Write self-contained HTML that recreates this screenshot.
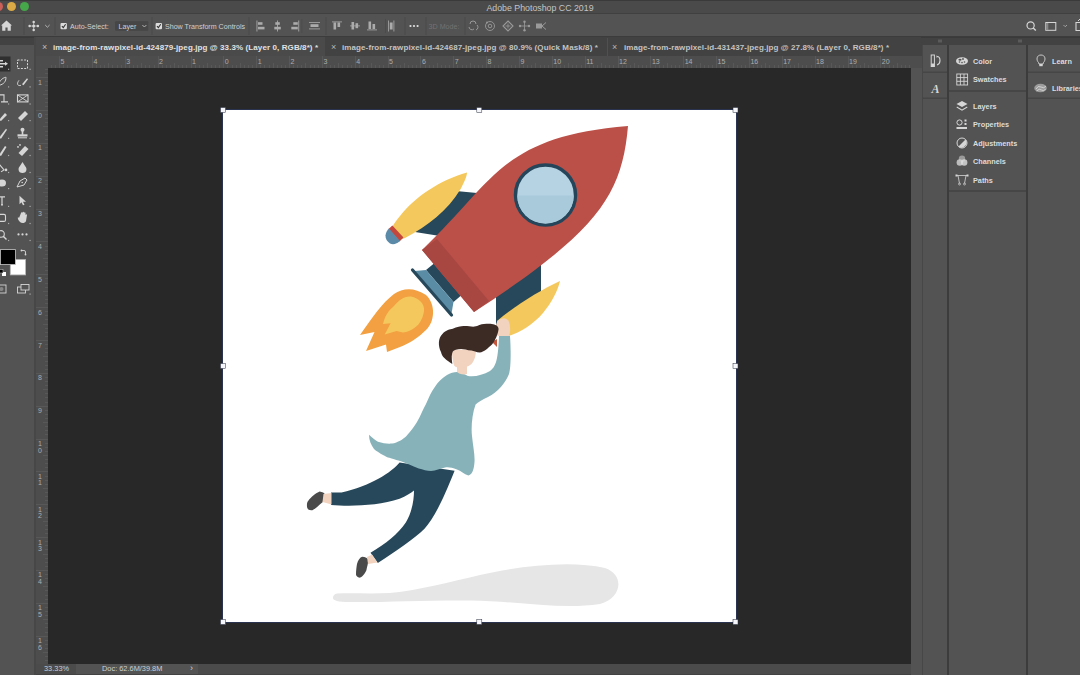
<!DOCTYPE html>
<html><head><meta charset="utf-8">
<style>
*{margin:0;padding:0;box-sizing:border-box}
html,body{width:1080px;height:675px;overflow:hidden;background:#535353;font-family:"Liberation Sans",sans-serif;position:relative}
.a{position:absolute}
#title{left:0;top:0;width:1080px;height:14px;background:#4a4a4a;border-top:1px solid #3a3a3a;border-bottom:1px solid #404040}
#title .t{position:absolute;left:0;width:1080px;top:1.8px;text-align:center;color:#c4c4c4;font-size:8.8px;line-height:11px}
.dot{position:absolute;top:1.2px;width:9px;height:9px;border-radius:50%}
#opts{left:0;top:14px;width:1080px;height:23px;background:#535353;border-bottom:1px solid #3c3c3c}
#tabs{left:36px;top:37px;width:886px;height:19px;background:#424242}
.tab{position:absolute;height:19px;color:#cfcfcf;font-size:8px;font-weight:bold;letter-spacing:0.1px;line-height:19px;white-space:nowrap}
#rulerT{left:36px;top:56px;width:886px;height:12px;background:#4d4d4d}
#rulerL{left:36px;top:56px;width:12px;height:608px;background:#4d4d4d}
#canvas{left:48px;top:68px;width:863px;height:596px;background:#282828}
#status{left:36px;top:664px;width:886px;height:11px;background:#4b4b4b;border-bottom:1px solid #424242}
#tools{left:0;top:37px;width:34px;height:638px;background:#535353}
#doc{left:222px;top:109px;width:514.5px;height:514px;border:1px solid #2a3450;background:#fff}
.pcol{position:absolute;top:37px;height:638px;background:#535353}
.hdr{position:absolute;top:37px;height:8px;background:#424242;border-top:1px solid #3a3a3a}
.ptxt{position:absolute;color:#dcdcdc;font-size:7.3px;font-weight:bold;line-height:10px;white-space:nowrap}
.tk{position:absolute;width:1px;background:#585858}
.rn{position:absolute;color:#aeaeae;font-size:7px;line-height:7px}
.ot{position:absolute;color:#d0d0d0;font-size:7.1px;line-height:10px;white-space:nowrap}
</style></head><body>
<div id="title" class="a"><div class="dot" style="left:-6.5px;background:#cc5f57"></div><div class="dot" style="left:6.5px;background:#d9aa45"></div><div class="dot" style="left:19.5px;background:#46a64a"></div><div class="t">Adobe Photoshop CC 2019</div></div>
<div id="opts" class="a"></div>
<div id="tools" class="a"></div>
<div class="a" style="left:0;top:37px;width:34px;height:8px;background:#424242;border-top:1px solid #3a3a3a"></div>
<div class="a" style="left:34px;top:37px;width:2px;height:638px;background:#474747"></div>
<div id="tabs" class="a"></div>
<div class="a" style="left:36px;top:37px;width:289px;height:19px;background:#4a4a4a"></div>
<div class="a" style="left:607px;top:38px;width:1px;height:18px;background:#505050"></div>
<div id="rulerT" class="a"></div>
<div id="rulerL" class="a"></div>
<div class="tk" style="left:50.8px;top:65px;height:3px"></div>
<div class="tk" style="left:54.9px;top:65px;height:3px"></div>
<div class="tk" style="left:59.1px;top:56px;height:12px"></div>
<div class="tk" style="left:63.2px;top:65px;height:3px"></div>
<div class="tk" style="left:67.3px;top:65px;height:3px"></div>
<div class="tk" style="left:71.4px;top:65px;height:3px"></div>
<div class="tk" style="left:75.5px;top:63px;height:5px"></div>
<div class="tk" style="left:79.6px;top:65px;height:3px"></div>
<div class="tk" style="left:83.7px;top:65px;height:3px"></div>
<div class="tk" style="left:87.8px;top:65px;height:3px"></div>
<div class="rn" style="left:60.6px;top:57.5px">5</div>
<div class="tk" style="left:91.9px;top:56px;height:12px"></div>
<div class="tk" style="left:96.0px;top:65px;height:3px"></div>
<div class="tk" style="left:100.1px;top:65px;height:3px"></div>
<div class="tk" style="left:104.2px;top:65px;height:3px"></div>
<div class="tk" style="left:108.3px;top:63px;height:5px"></div>
<div class="tk" style="left:112.4px;top:65px;height:3px"></div>
<div class="tk" style="left:116.5px;top:65px;height:3px"></div>
<div class="tk" style="left:120.6px;top:65px;height:3px"></div>
<div class="rn" style="left:93.4px;top:57.5px">4</div>
<div class="tk" style="left:124.8px;top:56px;height:12px"></div>
<div class="tk" style="left:128.9px;top:65px;height:3px"></div>
<div class="tk" style="left:133.0px;top:65px;height:3px"></div>
<div class="tk" style="left:137.1px;top:65px;height:3px"></div>
<div class="tk" style="left:141.2px;top:63px;height:5px"></div>
<div class="tk" style="left:145.3px;top:65px;height:3px"></div>
<div class="tk" style="left:149.4px;top:65px;height:3px"></div>
<div class="tk" style="left:153.5px;top:65px;height:3px"></div>
<div class="rn" style="left:126.2px;top:57.5px">3</div>
<div class="tk" style="left:157.6px;top:56px;height:12px"></div>
<div class="tk" style="left:161.7px;top:65px;height:3px"></div>
<div class="tk" style="left:165.8px;top:65px;height:3px"></div>
<div class="tk" style="left:169.9px;top:65px;height:3px"></div>
<div class="tk" style="left:174.0px;top:63px;height:5px"></div>
<div class="tk" style="left:178.1px;top:65px;height:3px"></div>
<div class="tk" style="left:182.2px;top:65px;height:3px"></div>
<div class="tk" style="left:186.3px;top:65px;height:3px"></div>
<div class="rn" style="left:159.1px;top:57.5px">2</div>
<div class="tk" style="left:190.5px;top:56px;height:12px"></div>
<div class="tk" style="left:194.6px;top:65px;height:3px"></div>
<div class="tk" style="left:198.7px;top:65px;height:3px"></div>
<div class="tk" style="left:202.8px;top:65px;height:3px"></div>
<div class="tk" style="left:206.9px;top:63px;height:5px"></div>
<div class="tk" style="left:211.0px;top:65px;height:3px"></div>
<div class="tk" style="left:215.1px;top:65px;height:3px"></div>
<div class="tk" style="left:219.2px;top:65px;height:3px"></div>
<div class="rn" style="left:192.0px;top:57.5px">1</div>
<div class="tk" style="left:223.3px;top:56px;height:12px"></div>
<div class="tk" style="left:227.4px;top:65px;height:3px"></div>
<div class="tk" style="left:231.5px;top:65px;height:3px"></div>
<div class="tk" style="left:235.6px;top:65px;height:3px"></div>
<div class="tk" style="left:239.7px;top:63px;height:5px"></div>
<div class="tk" style="left:243.8px;top:65px;height:3px"></div>
<div class="tk" style="left:247.9px;top:65px;height:3px"></div>
<div class="tk" style="left:252.0px;top:65px;height:3px"></div>
<div class="rn" style="left:224.8px;top:57.5px">0</div>
<div class="tk" style="left:256.2px;top:56px;height:12px"></div>
<div class="tk" style="left:260.3px;top:65px;height:3px"></div>
<div class="tk" style="left:264.4px;top:65px;height:3px"></div>
<div class="tk" style="left:268.5px;top:65px;height:3px"></div>
<div class="tk" style="left:272.6px;top:63px;height:5px"></div>
<div class="tk" style="left:276.7px;top:65px;height:3px"></div>
<div class="tk" style="left:280.8px;top:65px;height:3px"></div>
<div class="tk" style="left:284.9px;top:65px;height:3px"></div>
<div class="rn" style="left:257.7px;top:57.5px">1</div>
<div class="tk" style="left:289.0px;top:56px;height:12px"></div>
<div class="tk" style="left:293.1px;top:65px;height:3px"></div>
<div class="tk" style="left:297.2px;top:65px;height:3px"></div>
<div class="tk" style="left:301.3px;top:65px;height:3px"></div>
<div class="tk" style="left:305.4px;top:63px;height:5px"></div>
<div class="tk" style="left:309.5px;top:65px;height:3px"></div>
<div class="tk" style="left:313.6px;top:65px;height:3px"></div>
<div class="tk" style="left:317.7px;top:65px;height:3px"></div>
<div class="rn" style="left:290.5px;top:57.5px">2</div>
<div class="tk" style="left:321.9px;top:56px;height:12px"></div>
<div class="tk" style="left:326.0px;top:65px;height:3px"></div>
<div class="tk" style="left:330.1px;top:65px;height:3px"></div>
<div class="tk" style="left:334.2px;top:65px;height:3px"></div>
<div class="tk" style="left:338.3px;top:63px;height:5px"></div>
<div class="tk" style="left:342.4px;top:65px;height:3px"></div>
<div class="tk" style="left:346.5px;top:65px;height:3px"></div>
<div class="tk" style="left:350.6px;top:65px;height:3px"></div>
<div class="rn" style="left:323.4px;top:57.5px">3</div>
<div class="tk" style="left:354.7px;top:56px;height:12px"></div>
<div class="tk" style="left:358.8px;top:65px;height:3px"></div>
<div class="tk" style="left:362.9px;top:65px;height:3px"></div>
<div class="tk" style="left:367.0px;top:65px;height:3px"></div>
<div class="tk" style="left:371.1px;top:63px;height:5px"></div>
<div class="tk" style="left:375.2px;top:65px;height:3px"></div>
<div class="tk" style="left:379.3px;top:65px;height:3px"></div>
<div class="tk" style="left:383.4px;top:65px;height:3px"></div>
<div class="rn" style="left:356.2px;top:57.5px">4</div>
<div class="tk" style="left:387.6px;top:56px;height:12px"></div>
<div class="tk" style="left:391.7px;top:65px;height:3px"></div>
<div class="tk" style="left:395.8px;top:65px;height:3px"></div>
<div class="tk" style="left:399.9px;top:65px;height:3px"></div>
<div class="tk" style="left:404.0px;top:63px;height:5px"></div>
<div class="tk" style="left:408.1px;top:65px;height:3px"></div>
<div class="tk" style="left:412.2px;top:65px;height:3px"></div>
<div class="tk" style="left:416.3px;top:65px;height:3px"></div>
<div class="rn" style="left:389.1px;top:57.5px">5</div>
<div class="tk" style="left:420.4px;top:56px;height:12px"></div>
<div class="tk" style="left:424.5px;top:65px;height:3px"></div>
<div class="tk" style="left:428.6px;top:65px;height:3px"></div>
<div class="tk" style="left:432.7px;top:65px;height:3px"></div>
<div class="tk" style="left:436.8px;top:63px;height:5px"></div>
<div class="tk" style="left:440.9px;top:65px;height:3px"></div>
<div class="tk" style="left:445.0px;top:65px;height:3px"></div>
<div class="tk" style="left:449.1px;top:65px;height:3px"></div>
<div class="rn" style="left:421.9px;top:57.5px">6</div>
<div class="tk" style="left:453.2px;top:56px;height:12px"></div>
<div class="tk" style="left:457.4px;top:65px;height:3px"></div>
<div class="tk" style="left:461.5px;top:65px;height:3px"></div>
<div class="tk" style="left:465.6px;top:65px;height:3px"></div>
<div class="tk" style="left:469.7px;top:63px;height:5px"></div>
<div class="tk" style="left:473.8px;top:65px;height:3px"></div>
<div class="tk" style="left:477.9px;top:65px;height:3px"></div>
<div class="tk" style="left:482.0px;top:65px;height:3px"></div>
<div class="rn" style="left:454.8px;top:57.5px">7</div>
<div class="tk" style="left:486.1px;top:56px;height:12px"></div>
<div class="tk" style="left:490.2px;top:65px;height:3px"></div>
<div class="tk" style="left:494.3px;top:65px;height:3px"></div>
<div class="tk" style="left:498.4px;top:65px;height:3px"></div>
<div class="tk" style="left:502.5px;top:63px;height:5px"></div>
<div class="tk" style="left:506.6px;top:65px;height:3px"></div>
<div class="tk" style="left:510.7px;top:65px;height:3px"></div>
<div class="tk" style="left:514.8px;top:65px;height:3px"></div>
<div class="rn" style="left:487.6px;top:57.5px">8</div>
<div class="tk" style="left:519.0px;top:56px;height:12px"></div>
<div class="tk" style="left:523.1px;top:65px;height:3px"></div>
<div class="tk" style="left:527.2px;top:65px;height:3px"></div>
<div class="tk" style="left:531.3px;top:65px;height:3px"></div>
<div class="tk" style="left:535.4px;top:63px;height:5px"></div>
<div class="tk" style="left:539.5px;top:65px;height:3px"></div>
<div class="tk" style="left:543.6px;top:65px;height:3px"></div>
<div class="tk" style="left:547.7px;top:65px;height:3px"></div>
<div class="rn" style="left:520.5px;top:57.5px">9</div>
<div class="tk" style="left:551.8px;top:56px;height:12px"></div>
<div class="tk" style="left:555.9px;top:65px;height:3px"></div>
<div class="tk" style="left:560.0px;top:65px;height:3px"></div>
<div class="tk" style="left:564.1px;top:65px;height:3px"></div>
<div class="tk" style="left:568.2px;top:63px;height:5px"></div>
<div class="tk" style="left:572.3px;top:65px;height:3px"></div>
<div class="tk" style="left:576.4px;top:65px;height:3px"></div>
<div class="tk" style="left:580.5px;top:65px;height:3px"></div>
<div class="rn" style="left:553.3px;top:57.5px">10</div>
<div class="tk" style="left:584.7px;top:56px;height:12px"></div>
<div class="tk" style="left:588.8px;top:65px;height:3px"></div>
<div class="tk" style="left:592.9px;top:65px;height:3px"></div>
<div class="tk" style="left:597.0px;top:65px;height:3px"></div>
<div class="tk" style="left:601.1px;top:63px;height:5px"></div>
<div class="tk" style="left:605.2px;top:65px;height:3px"></div>
<div class="tk" style="left:609.3px;top:65px;height:3px"></div>
<div class="tk" style="left:613.4px;top:65px;height:3px"></div>
<div class="rn" style="left:586.2px;top:57.5px">11</div>
<div class="tk" style="left:617.5px;top:56px;height:12px"></div>
<div class="tk" style="left:621.6px;top:65px;height:3px"></div>
<div class="tk" style="left:625.7px;top:65px;height:3px"></div>
<div class="tk" style="left:629.8px;top:65px;height:3px"></div>
<div class="tk" style="left:633.9px;top:63px;height:5px"></div>
<div class="tk" style="left:638.0px;top:65px;height:3px"></div>
<div class="tk" style="left:642.1px;top:65px;height:3px"></div>
<div class="tk" style="left:646.2px;top:65px;height:3px"></div>
<div class="rn" style="left:619.0px;top:57.5px">12</div>
<div class="tk" style="left:650.4px;top:56px;height:12px"></div>
<div class="tk" style="left:654.5px;top:65px;height:3px"></div>
<div class="tk" style="left:658.6px;top:65px;height:3px"></div>
<div class="tk" style="left:662.7px;top:65px;height:3px"></div>
<div class="tk" style="left:666.8px;top:63px;height:5px"></div>
<div class="tk" style="left:670.9px;top:65px;height:3px"></div>
<div class="tk" style="left:675.0px;top:65px;height:3px"></div>
<div class="tk" style="left:679.1px;top:65px;height:3px"></div>
<div class="rn" style="left:651.9px;top:57.5px">13</div>
<div class="tk" style="left:683.2px;top:56px;height:12px"></div>
<div class="tk" style="left:687.3px;top:65px;height:3px"></div>
<div class="tk" style="left:691.4px;top:65px;height:3px"></div>
<div class="tk" style="left:695.5px;top:65px;height:3px"></div>
<div class="tk" style="left:699.6px;top:63px;height:5px"></div>
<div class="tk" style="left:703.7px;top:65px;height:3px"></div>
<div class="tk" style="left:707.8px;top:65px;height:3px"></div>
<div class="tk" style="left:711.9px;top:65px;height:3px"></div>
<div class="rn" style="left:684.7px;top:57.5px">14</div>
<div class="tk" style="left:716.0px;top:56px;height:12px"></div>
<div class="tk" style="left:720.2px;top:65px;height:3px"></div>
<div class="tk" style="left:724.3px;top:65px;height:3px"></div>
<div class="tk" style="left:728.4px;top:65px;height:3px"></div>
<div class="tk" style="left:732.5px;top:63px;height:5px"></div>
<div class="tk" style="left:736.6px;top:65px;height:3px"></div>
<div class="tk" style="left:740.7px;top:65px;height:3px"></div>
<div class="tk" style="left:744.8px;top:65px;height:3px"></div>
<div class="rn" style="left:717.5px;top:57.5px">15</div>
<div class="tk" style="left:748.9px;top:56px;height:12px"></div>
<div class="tk" style="left:753.0px;top:65px;height:3px"></div>
<div class="tk" style="left:757.1px;top:65px;height:3px"></div>
<div class="tk" style="left:761.2px;top:65px;height:3px"></div>
<div class="tk" style="left:765.3px;top:63px;height:5px"></div>
<div class="tk" style="left:769.4px;top:65px;height:3px"></div>
<div class="tk" style="left:773.5px;top:65px;height:3px"></div>
<div class="tk" style="left:777.6px;top:65px;height:3px"></div>
<div class="rn" style="left:750.4px;top:57.5px">16</div>
<div class="tk" style="left:781.8px;top:56px;height:12px"></div>
<div class="tk" style="left:785.9px;top:65px;height:3px"></div>
<div class="tk" style="left:790.0px;top:65px;height:3px"></div>
<div class="tk" style="left:794.1px;top:65px;height:3px"></div>
<div class="tk" style="left:798.2px;top:63px;height:5px"></div>
<div class="tk" style="left:802.3px;top:65px;height:3px"></div>
<div class="tk" style="left:806.4px;top:65px;height:3px"></div>
<div class="tk" style="left:810.5px;top:65px;height:3px"></div>
<div class="rn" style="left:783.2px;top:57.5px">17</div>
<div class="tk" style="left:814.6px;top:56px;height:12px"></div>
<div class="tk" style="left:818.7px;top:65px;height:3px"></div>
<div class="tk" style="left:822.8px;top:65px;height:3px"></div>
<div class="tk" style="left:826.9px;top:65px;height:3px"></div>
<div class="tk" style="left:831.0px;top:63px;height:5px"></div>
<div class="tk" style="left:835.1px;top:65px;height:3px"></div>
<div class="tk" style="left:839.2px;top:65px;height:3px"></div>
<div class="tk" style="left:843.3px;top:65px;height:3px"></div>
<div class="rn" style="left:816.1px;top:57.5px">18</div>
<div class="tk" style="left:847.5px;top:56px;height:12px"></div>
<div class="tk" style="left:851.6px;top:65px;height:3px"></div>
<div class="tk" style="left:855.7px;top:65px;height:3px"></div>
<div class="tk" style="left:859.8px;top:65px;height:3px"></div>
<div class="tk" style="left:863.9px;top:63px;height:5px"></div>
<div class="tk" style="left:868.0px;top:65px;height:3px"></div>
<div class="tk" style="left:872.1px;top:65px;height:3px"></div>
<div class="tk" style="left:876.2px;top:65px;height:3px"></div>
<div class="rn" style="left:849.0px;top:57.5px">19</div>
<div class="tk" style="left:880.3px;top:56px;height:12px"></div>
<div class="tk" style="left:884.4px;top:65px;height:3px"></div>
<div class="tk" style="left:888.5px;top:65px;height:3px"></div>
<div class="tk" style="left:892.6px;top:65px;height:3px"></div>
<div class="tk" style="left:896.7px;top:63px;height:5px"></div>
<div class="tk" style="left:900.8px;top:65px;height:3px"></div>
<div class="tk" style="left:904.9px;top:65px;height:3px"></div>
<div class="tk" style="left:909.0px;top:65px;height:3px"></div>
<div class="rn" style="left:881.8px;top:57.5px">20</div>
<div class="tk" style="top:68.9px;left:45px;width:3px;height:1px"></div>
<div class="tk" style="top:73.0px;left:45px;width:3px;height:1px"></div>
<div class="tk" style="top:77.2px;left:36px;width:12px;height:1px"></div>
<div class="tk" style="top:81.3px;left:45px;width:3px;height:1px"></div>
<div class="tk" style="top:85.4px;left:45px;width:3px;height:1px"></div>
<div class="tk" style="top:89.5px;left:45px;width:3px;height:1px"></div>
<div class="tk" style="top:93.6px;left:43px;width:5px;height:1px"></div>
<div class="tk" style="top:97.7px;left:45px;width:3px;height:1px"></div>
<div class="tk" style="top:101.8px;left:45px;width:3px;height:1px"></div>
<div class="tk" style="top:105.9px;left:45px;width:3px;height:1px"></div>
<div class="rn" style="left:38px;top:78.7px">1</div>
<div class="tk" style="top:110.0px;left:36px;width:12px;height:1px"></div>
<div class="tk" style="top:114.1px;left:45px;width:3px;height:1px"></div>
<div class="tk" style="top:118.2px;left:45px;width:3px;height:1px"></div>
<div class="tk" style="top:122.3px;left:45px;width:3px;height:1px"></div>
<div class="tk" style="top:126.4px;left:43px;width:5px;height:1px"></div>
<div class="tk" style="top:130.5px;left:45px;width:3px;height:1px"></div>
<div class="tk" style="top:134.6px;left:45px;width:3px;height:1px"></div>
<div class="tk" style="top:138.7px;left:45px;width:3px;height:1px"></div>
<div class="rn" style="left:38px;top:111.5px">0</div>
<div class="tk" style="top:142.8px;left:36px;width:12px;height:1px"></div>
<div class="tk" style="top:147.0px;left:45px;width:3px;height:1px"></div>
<div class="tk" style="top:151.1px;left:45px;width:3px;height:1px"></div>
<div class="tk" style="top:155.2px;left:45px;width:3px;height:1px"></div>
<div class="tk" style="top:159.3px;left:43px;width:5px;height:1px"></div>
<div class="tk" style="top:163.4px;left:45px;width:3px;height:1px"></div>
<div class="tk" style="top:167.5px;left:45px;width:3px;height:1px"></div>
<div class="tk" style="top:171.6px;left:45px;width:3px;height:1px"></div>
<div class="rn" style="left:38px;top:144.3px">1</div>
<div class="tk" style="top:175.7px;left:36px;width:12px;height:1px"></div>
<div class="tk" style="top:179.8px;left:45px;width:3px;height:1px"></div>
<div class="tk" style="top:183.9px;left:45px;width:3px;height:1px"></div>
<div class="tk" style="top:188.0px;left:45px;width:3px;height:1px"></div>
<div class="tk" style="top:192.1px;left:43px;width:5px;height:1px"></div>
<div class="tk" style="top:196.2px;left:45px;width:3px;height:1px"></div>
<div class="tk" style="top:200.3px;left:45px;width:3px;height:1px"></div>
<div class="tk" style="top:204.4px;left:45px;width:3px;height:1px"></div>
<div class="rn" style="left:38px;top:177.2px">2</div>
<div class="tk" style="top:208.6px;left:36px;width:12px;height:1px"></div>
<div class="tk" style="top:212.7px;left:45px;width:3px;height:1px"></div>
<div class="tk" style="top:216.8px;left:45px;width:3px;height:1px"></div>
<div class="tk" style="top:220.9px;left:45px;width:3px;height:1px"></div>
<div class="tk" style="top:225.0px;left:43px;width:5px;height:1px"></div>
<div class="tk" style="top:229.1px;left:45px;width:3px;height:1px"></div>
<div class="tk" style="top:233.2px;left:45px;width:3px;height:1px"></div>
<div class="tk" style="top:237.3px;left:45px;width:3px;height:1px"></div>
<div class="rn" style="left:38px;top:210.1px">3</div>
<div class="tk" style="top:241.4px;left:36px;width:12px;height:1px"></div>
<div class="tk" style="top:245.5px;left:45px;width:3px;height:1px"></div>
<div class="tk" style="top:249.6px;left:45px;width:3px;height:1px"></div>
<div class="tk" style="top:253.7px;left:45px;width:3px;height:1px"></div>
<div class="tk" style="top:257.8px;left:43px;width:5px;height:1px"></div>
<div class="tk" style="top:261.9px;left:45px;width:3px;height:1px"></div>
<div class="tk" style="top:266.0px;left:45px;width:3px;height:1px"></div>
<div class="tk" style="top:270.1px;left:45px;width:3px;height:1px"></div>
<div class="rn" style="left:38px;top:242.9px">4</div>
<div class="tk" style="top:274.2px;left:36px;width:12px;height:1px"></div>
<div class="tk" style="top:278.4px;left:45px;width:3px;height:1px"></div>
<div class="tk" style="top:282.5px;left:45px;width:3px;height:1px"></div>
<div class="tk" style="top:286.6px;left:45px;width:3px;height:1px"></div>
<div class="tk" style="top:290.7px;left:43px;width:5px;height:1px"></div>
<div class="tk" style="top:294.8px;left:45px;width:3px;height:1px"></div>
<div class="tk" style="top:298.9px;left:45px;width:3px;height:1px"></div>
<div class="tk" style="top:303.0px;left:45px;width:3px;height:1px"></div>
<div class="rn" style="left:38px;top:275.8px">5</div>
<div class="tk" style="top:307.1px;left:36px;width:12px;height:1px"></div>
<div class="tk" style="top:311.2px;left:45px;width:3px;height:1px"></div>
<div class="tk" style="top:315.3px;left:45px;width:3px;height:1px"></div>
<div class="tk" style="top:319.4px;left:45px;width:3px;height:1px"></div>
<div class="tk" style="top:323.5px;left:43px;width:5px;height:1px"></div>
<div class="tk" style="top:327.6px;left:45px;width:3px;height:1px"></div>
<div class="tk" style="top:331.7px;left:45px;width:3px;height:1px"></div>
<div class="tk" style="top:335.8px;left:45px;width:3px;height:1px"></div>
<div class="rn" style="left:38px;top:308.6px">6</div>
<div class="tk" style="top:340.0px;left:36px;width:12px;height:1px"></div>
<div class="tk" style="top:344.1px;left:45px;width:3px;height:1px"></div>
<div class="tk" style="top:348.2px;left:45px;width:3px;height:1px"></div>
<div class="tk" style="top:352.3px;left:45px;width:3px;height:1px"></div>
<div class="tk" style="top:356.4px;left:43px;width:5px;height:1px"></div>
<div class="tk" style="top:360.5px;left:45px;width:3px;height:1px"></div>
<div class="tk" style="top:364.6px;left:45px;width:3px;height:1px"></div>
<div class="tk" style="top:368.7px;left:45px;width:3px;height:1px"></div>
<div class="rn" style="left:38px;top:341.5px">7</div>
<div class="tk" style="top:372.8px;left:36px;width:12px;height:1px"></div>
<div class="tk" style="top:376.9px;left:45px;width:3px;height:1px"></div>
<div class="tk" style="top:381.0px;left:45px;width:3px;height:1px"></div>
<div class="tk" style="top:385.1px;left:45px;width:3px;height:1px"></div>
<div class="tk" style="top:389.2px;left:43px;width:5px;height:1px"></div>
<div class="tk" style="top:393.3px;left:45px;width:3px;height:1px"></div>
<div class="tk" style="top:397.4px;left:45px;width:3px;height:1px"></div>
<div class="tk" style="top:401.5px;left:45px;width:3px;height:1px"></div>
<div class="rn" style="left:38px;top:374.3px">8</div>
<div class="tk" style="top:405.7px;left:36px;width:12px;height:1px"></div>
<div class="tk" style="top:409.8px;left:45px;width:3px;height:1px"></div>
<div class="tk" style="top:413.9px;left:45px;width:3px;height:1px"></div>
<div class="tk" style="top:418.0px;left:45px;width:3px;height:1px"></div>
<div class="tk" style="top:422.1px;left:43px;width:5px;height:1px"></div>
<div class="tk" style="top:426.2px;left:45px;width:3px;height:1px"></div>
<div class="tk" style="top:430.3px;left:45px;width:3px;height:1px"></div>
<div class="tk" style="top:434.4px;left:45px;width:3px;height:1px"></div>
<div class="rn" style="left:38px;top:407.2px">9</div>
<div class="tk" style="top:438.5px;left:36px;width:12px;height:1px"></div>
<div class="tk" style="top:442.6px;left:45px;width:3px;height:1px"></div>
<div class="tk" style="top:446.7px;left:45px;width:3px;height:1px"></div>
<div class="tk" style="top:450.8px;left:45px;width:3px;height:1px"></div>
<div class="tk" style="top:454.9px;left:43px;width:5px;height:1px"></div>
<div class="tk" style="top:459.0px;left:45px;width:3px;height:1px"></div>
<div class="tk" style="top:463.1px;left:45px;width:3px;height:1px"></div>
<div class="tk" style="top:467.2px;left:45px;width:3px;height:1px"></div>
<div class="rn" style="left:38px;top:440.0px">1</div>
<div class="rn" style="left:38px;top:446.5px">0</div>
<div class="tk" style="top:471.4px;left:36px;width:12px;height:1px"></div>
<div class="tk" style="top:475.5px;left:45px;width:3px;height:1px"></div>
<div class="tk" style="top:479.6px;left:45px;width:3px;height:1px"></div>
<div class="tk" style="top:483.7px;left:45px;width:3px;height:1px"></div>
<div class="tk" style="top:487.8px;left:43px;width:5px;height:1px"></div>
<div class="tk" style="top:491.9px;left:45px;width:3px;height:1px"></div>
<div class="tk" style="top:496.0px;left:45px;width:3px;height:1px"></div>
<div class="tk" style="top:500.1px;left:45px;width:3px;height:1px"></div>
<div class="rn" style="left:38px;top:472.9px">1</div>
<div class="rn" style="left:38px;top:479.4px">1</div>
<div class="tk" style="top:504.2px;left:36px;width:12px;height:1px"></div>
<div class="tk" style="top:508.3px;left:45px;width:3px;height:1px"></div>
<div class="tk" style="top:512.4px;left:45px;width:3px;height:1px"></div>
<div class="tk" style="top:516.5px;left:45px;width:3px;height:1px"></div>
<div class="tk" style="top:520.6px;left:43px;width:5px;height:1px"></div>
<div class="tk" style="top:524.7px;left:45px;width:3px;height:1px"></div>
<div class="tk" style="top:528.8px;left:45px;width:3px;height:1px"></div>
<div class="tk" style="top:532.9px;left:45px;width:3px;height:1px"></div>
<div class="rn" style="left:38px;top:505.7px">1</div>
<div class="rn" style="left:38px;top:512.2px">2</div>
<div class="tk" style="top:537.0px;left:36px;width:12px;height:1px"></div>
<div class="tk" style="top:541.2px;left:45px;width:3px;height:1px"></div>
<div class="tk" style="top:545.3px;left:45px;width:3px;height:1px"></div>
<div class="tk" style="top:549.4px;left:45px;width:3px;height:1px"></div>
<div class="tk" style="top:553.5px;left:43px;width:5px;height:1px"></div>
<div class="tk" style="top:557.6px;left:45px;width:3px;height:1px"></div>
<div class="tk" style="top:561.7px;left:45px;width:3px;height:1px"></div>
<div class="tk" style="top:565.8px;left:45px;width:3px;height:1px"></div>
<div class="rn" style="left:38px;top:538.5px">1</div>
<div class="rn" style="left:38px;top:545.0px">3</div>
<div class="tk" style="top:569.9px;left:36px;width:12px;height:1px"></div>
<div class="tk" style="top:574.0px;left:45px;width:3px;height:1px"></div>
<div class="tk" style="top:578.1px;left:45px;width:3px;height:1px"></div>
<div class="tk" style="top:582.2px;left:45px;width:3px;height:1px"></div>
<div class="tk" style="top:586.3px;left:43px;width:5px;height:1px"></div>
<div class="tk" style="top:590.4px;left:45px;width:3px;height:1px"></div>
<div class="tk" style="top:594.5px;left:45px;width:3px;height:1px"></div>
<div class="tk" style="top:598.6px;left:45px;width:3px;height:1px"></div>
<div class="rn" style="left:38px;top:571.4px">1</div>
<div class="rn" style="left:38px;top:577.9px">4</div>
<div class="tk" style="top:602.8px;left:36px;width:12px;height:1px"></div>
<div class="tk" style="top:606.9px;left:45px;width:3px;height:1px"></div>
<div class="tk" style="top:611.0px;left:45px;width:3px;height:1px"></div>
<div class="tk" style="top:615.1px;left:45px;width:3px;height:1px"></div>
<div class="tk" style="top:619.2px;left:43px;width:5px;height:1px"></div>
<div class="tk" style="top:623.3px;left:45px;width:3px;height:1px"></div>
<div class="tk" style="top:627.4px;left:45px;width:3px;height:1px"></div>
<div class="tk" style="top:631.5px;left:45px;width:3px;height:1px"></div>
<div class="rn" style="left:38px;top:604.2px">1</div>
<div class="rn" style="left:38px;top:610.8px">5</div>
<div class="tk" style="top:635.6px;left:36px;width:12px;height:1px"></div>
<div class="tk" style="top:639.7px;left:45px;width:3px;height:1px"></div>
<div class="tk" style="top:643.8px;left:45px;width:3px;height:1px"></div>
<div class="tk" style="top:647.9px;left:45px;width:3px;height:1px"></div>
<div class="tk" style="top:652.0px;left:43px;width:5px;height:1px"></div>
<div class="tk" style="top:656.1px;left:45px;width:3px;height:1px"></div>
<div class="tk" style="top:660.2px;left:45px;width:3px;height:1px"></div>
<div class="rn" style="left:38px;top:637.1px">1</div>
<div class="rn" style="left:38px;top:643.6px">6</div>
<div id="canvas" class="a"></div>
<div id="status" class="a"></div>
<div class="a" style="left:76px;top:664px;width:122px;height:10px;background:#535353"></div>
<div class="a" style="left:911px;top:664px;width:11px;height:10px;background:#505050"></div>
<div id="doc" class="a"></div>
<svg class="a" style="left:0;top:0" width="1080" height="675" viewBox="0 0 1080 675">
<!-- shadow -->
<path d="M337,593.5 C355,593 372,594 390,593 C420,590 450,582 480,575 C520,566 570,560 605,568 C625,575 622,598 600,604 C560,610 520,601 470,600.5 C430,600 380,602.5 350,602 C338,602 333,600.5 333,598 C333,595.5 334.5,593.8 337,593.5 Z" fill="#e6e6e6"/>
<!-- upper fin -->
<path d="M456,191 L477,193 L440,236 L415,232 Z" fill="#26485a"/>
<!-- upper booster -->
<path d="M467,172.5 C440,180 415,197 400,216 C393,224 390,230 391,234 C394,239 400,240 405,238 C428,226 448,210 460,190 C464,183 467,176 467,172.5 Z" fill="#f4c85c"/>
<path d="M392.4,225.5 L403.5,237.5 L399.5,241.5 L388.5,229 Z" fill="#c4473e"/>
<path d="M389,228.5 L400,241 C397,244 393,245 390,243.5 C387,241.5 385.3,238.5 385.5,235.5 C385.8,232.5 387.3,230 389,228.5 Z" fill="#5b8aa8"/>
<!-- lower fin -->
<path d="M496,292 L541,262 L541,300 L496,332 Z" fill="#26485a"/>
<!-- nozzle -->
<path d="M437,261 L464,293 L453.5,302 L426,270 Z" fill="#26485a"/>
<path d="M426,270 L453.5,302 L451.5,313.5 L414.5,271 Z" fill="#5b8ca6"/>
<path d="M412.5,270 L451.5,315" stroke="#26485a" stroke-width="3.2" stroke-linecap="round"/>
<!-- rocket body -->
<path d="M422,250 C496,180 500,137 628,126 C622,196 597,232 474,312 Z" fill="#bb5048"/>
<path d="M422,250 L474,312 L489,301 L437,239 Z" fill="#a84741"/>
<!-- window -->
<circle cx="545.5" cy="195" r="30" fill="#b5d3e2" stroke="#25465a" stroke-width="3.5"/>
<path d="M517.2,195.5 L573.8,195.5 A28.3,28.3 0 0,1 517.2,195.5 Z" fill="#a9cadb"/>
<!-- flame -->
<path d="M360,335 C372,318 382,303 394,294 C403,288 414,287 426,295 C436,304 435,322 426,330 C418,338 410,343 400,347 L387,352 L386,344.5 L366,351 L374.5,332 Z" fill="#f2a041"/>
<path d="M383,324 C385,316 388,311 394,306 C399,300 404,296 411,296.5 C419,298 425,304 424,311 C423,318 420,324 415,327.5 C411,330.5 407,332 403,332.5 L396.5,331 L384.7,334.5 L390.6,323.3 Z" fill="#f5c85d"/>
<!-- lower booster -->
<path d="M560,281 C540,290 515,306 497,321 L500,338 C515,336 532,326 543,313 C552,302 558,290 560,281 Z" fill="#f4c85c"/>
<!-- pants -->
<path d="M399.6,462.4 C392,472 370,486 341.5,492.5 L331,492.5 L331,505 C350,506.5 378,506 399.6,498.8 C406,496 411,493 414,490.5 C414,500 412,512 405.8,522.6 C398,534 386,544 370.5,552.7 L377.8,563 C395,552 415,538 424.5,528.8 C434,518 442,502 454.6,470.7 Z" fill="#26485a"/>
<!-- shoes -->
<path d="M319.7,491.5 C322,492 325,493 324.9,494.6 C324,498 323,500 322.8,501.9 C319,505 315,509 312.4,510.2 C310,510.5 308,510 307.3,508.1 C306.5,505 307,502 308.3,500.8 C311,497 316,493 319.7,491.5 Z" fill="#4a4a4a"/>
<path d="M323.5,494 L331.5,493 L331.5,504.5 L322.5,502 Z" fill="#f1d3bf"/>
<path d="M362.2,556.8 C365,557 368,558 368.5,560 C368,564 367,567 366.4,570.3 C365,574 362,577 360.2,577.6 C358,578 356,576 356,574.5 C356,571 356.5,567 357,564.1 C358,560 360,557.5 362.2,556.8 Z" fill="#4a4a4a"/>
<path d="M367,557 L372,554.5 L377.5,562.5 L368,564 Z" fill="#f1d3bf"/>
<!-- shirt -->
<path d="M447,375 C452,372 458,371 462,373 L468,376 C475,377 483,375 490,371 C495,367 498,363 499,336 L510,336 C511,350 511,368 509,374 C506,382 498,392 488,397 C482,400 478,402 475.6,404.4 C472,414 471,428 472,436 C473,446 475,455 474.5,462 C474,468 473,474 468.4,475.6 C464,474 461,471 457,469.5 C452,467.5 448,467 445,467.6 C440,468.5 436,471 431,471 C427,471 423,469.5 418.7,468.4 C412,466 406,463 401,461.3 C394,459 390,458 386.7,456.9 C381,454 376,451 374,449 C371,445 369,440 369,434.7 C373,438 376,441 378,441.8 C383,443.5 388,444 392,443.6 C398,442.5 403,439 406,436.4 C411,431 414,427 417,422 C421,415 423,409 426,404 C429,397 431,392 435,386.7 C438,382 442,378 447,375 Z" fill="#87b2b9"/>
<!-- neck & face -->
<path d="M457,363 L467,363 L467,374 C463,375 459,374 457,372 Z" fill="#f1d3bf"/>
<path d="M451.8,350 L476,349 C476,355 475,360 471.5,364 C468,367 463,368.5 460,368 C456,367.5 454,366 453.9,365 C452.5,360 452,355 451.8,350 Z" fill="#f1d3bf"/>
<!-- booster tail bits behind head -->
<path d="M492,342 L497,339 L497,347 Z" fill="#c4573e"/>
<!-- hand -->
<path d="M497,322 C501,317 507,317 509,322 C511,328 510,334 508.8,336 L497.5,336 C496,331 495,326 497,322 Z" fill="#f1d3bf"/>
<!-- hair -->
<path d="M452.3,363.9 C446,360 442,357 441,352 C438,346 438,338 442.4,333.9 C446,330 450,329 452.8,328.7 C457,327 461,326 464.2,326.1 C468,326 471,326.8 474.6,326.6 C478,326 481,324 483.9,324 C488,323.5 492,323.5 494.3,324.5 C497,325.5 499,327 498.5,329.7 C498,333 497,335 496.4,337 C495,340 494,342 492.2,344.2 C488,348 484,352 479.8,352.5 C476,352.5 474,350.8 471.5,350.5 C467,350 464,348.9 461.1,348.9 C457,349 454,350 452.8,351.5 C451.5,354 451.5,358 452.3,363.9 Z" fill="#3c2a25"/>
<!-- handles -->
<rect x="220.5" y="107.5" width="5" height="5" fill="#f4f6fb" stroke="#2a2f3c" stroke-width="0.5"/>
<rect x="476.8" y="107.5" width="5" height="5" fill="#f4f6fb" stroke="#2a2f3c" stroke-width="0.5"/>
<rect x="733.0" y="107.5" width="5" height="5" fill="#f4f6fb" stroke="#2a2f3c" stroke-width="0.5"/>
<rect x="220.5" y="363.5" width="5" height="5" fill="#f4f6fb" stroke="#2a2f3c" stroke-width="0.5"/>
<rect x="733.0" y="363.5" width="5" height="5" fill="#f4f6fb" stroke="#2a2f3c" stroke-width="0.5"/>
<rect x="220.5" y="619.5" width="5" height="5" fill="#f4f6fb" stroke="#2a2f3c" stroke-width="0.5"/>
<rect x="476.8" y="619.5" width="5" height="5" fill="#f4f6fb" stroke="#2a2f3c" stroke-width="0.5"/>
<rect x="733.0" y="619.5" width="5" height="5" fill="#f4f6fb" stroke="#2a2f3c" stroke-width="0.5"/>
</svg>

<div class="a" style="left:911px;top:68px;width:11px;height:607px;background:#535353"></div>

<div class="pcol" style="left:922px;width:25px;border-left:1px solid #474747"></div>
<div class="pcol" style="left:947px;width:2px;background:#3c3c3c"></div>
<div class="pcol" style="left:949px;width:77px"></div>
<div class="pcol" style="left:1026px;width:2px;background:#3c3c3c"></div>
<div class="pcol" style="left:1028px;width:52px"></div>
<div class="hdr" style="left:921px;width:159px"></div>
<svg class="a" style="left:0;top:0" width="1080" height="675" viewBox="0 0 1080 675"><rect x="0" y="56.5" width="10.5" height="15" fill="#2f2f2f"/>
<rect x="8" y="68.7" width="1.2" height="1.2" fill="#aaa"/>
<rect x="29.5" y="68.7" width="1.2" height="1.2" fill="#aaa"/>
<rect x="8" y="86.3" width="1.2" height="1.2" fill="#aaa"/>
<rect x="29.5" y="86.3" width="1.2" height="1.2" fill="#aaa"/>
<rect x="8" y="103.4" width="1.2" height="1.2" fill="#aaa"/>
<rect x="29.5" y="103.4" width="1.2" height="1.2" fill="#aaa"/>
<rect x="8" y="120.0" width="1.2" height="1.2" fill="#aaa"/>
<rect x="29.5" y="120.0" width="1.2" height="1.2" fill="#aaa"/>
<rect x="8" y="137.8" width="1.2" height="1.2" fill="#aaa"/>
<rect x="29.5" y="137.8" width="1.2" height="1.2" fill="#aaa"/>
<rect x="8" y="154.9" width="1.2" height="1.2" fill="#aaa"/>
<rect x="29.5" y="154.9" width="1.2" height="1.2" fill="#aaa"/>
<rect x="8" y="171.9" width="1.2" height="1.2" fill="#aaa"/>
<rect x="29.5" y="171.9" width="1.2" height="1.2" fill="#aaa"/>
<rect x="8" y="188.0" width="1.2" height="1.2" fill="#aaa"/>
<rect x="29.5" y="188.0" width="1.2" height="1.2" fill="#aaa"/>
<rect x="8" y="205.8" width="1.2" height="1.2" fill="#aaa"/>
<rect x="29.5" y="205.8" width="1.2" height="1.2" fill="#aaa"/>
<rect x="8" y="222.9" width="1.2" height="1.2" fill="#aaa"/>
<rect x="29.5" y="222.9" width="1.2" height="1.2" fill="#aaa"/>
<rect x="8" y="239.9" width="1.2" height="1.2" fill="#aaa"/>
<path d="M-1,60.7 h4 M-1,63.7 h7 M-1,66.7 h4" stroke="#d6d6d6" stroke-width="1.6"/>
<path d="M5,61.7 L8,63.7 L5,65.7 Z" fill="#d6d6d6"/>
<rect x="17.5" y="60.0" width="10" height="8.5" fill="none" stroke="#d6d6d6" stroke-width="1" stroke-dasharray="2,1.3"/>
<path d="M-1,83.3 C1,78.3 5,77.3 6,77.3 C6,81.3 4,84.3 -1,85.3" fill="none" stroke="#d6d6d6" stroke-width="1"/>
<path d="M19,80.3 C16,84.3 18,86.3 21,85.3" fill="none" stroke="#d6d6d6" stroke-width="0.9"/>
<path d="M22,84.3 L27,78.3 L28,79.3 L23.5,85.3 Z" fill="#d6d6d6"/>
<path d="M-1,94.9 h5 v7 h4 M1,101.9 h3" fill="none" stroke="#d6d6d6" stroke-width="1.1"/>
<rect x="17.5" y="94.9" width="10.5" height="7" fill="none" stroke="#d6d6d6" stroke-width="1.1"/>
<path d="M17.5,94.9 L28,101.9 M28,94.9 L17.5,101.9" stroke="#d6d6d6" stroke-width="0.9"/>
<path d="M-1,120 L5,113 L7,115 L1,121 Z" fill="#d6d6d6"/>
<path d="M18,118 L25,111 L28,114 L21,121 Z" fill="#d6d6d6"/>
<path d="M-1,137.8 L6,128.8 L7,129.8 L1,138.8 Z" fill="#d6d6d6"/>
<circle cx="22.5" cy="129.8" r="2" fill="#d6d6d6"/><rect x="21.7" y="130.8" width="1.6" height="4" fill="#d6d6d6"/><rect x="17.5" y="134.3" width="10" height="2.2" fill="#d6d6d6"/><rect x="18" y="137.3" width="9" height="1" fill="#d6d6d6"/>
<path d="M-1,154.9 L5,145.9 L6.5,146.9 L1,155.9 Z" fill="#d6d6d6"/>
<path d="M18.5,152.9 L25,145.9 L28.5,148.9 L22,155.9 Z" fill="#d6d6d6"/><circle cx="18" cy="146.9" r="0.9" fill="#d6d6d6"/><circle cx="20" cy="144.9" r="0.9" fill="#d6d6d6"/>
<path d="M-1,163.9 L4,169.9 L1,171.9" fill="none" stroke="#d6d6d6" stroke-width="1.1"/><circle cx="6" cy="169.9" r="1.3" fill="#d6d6d6"/>
<path d="M22.5,161.9 C24,164.9 26.5,166.9 26.5,168.9 C26.5,171.9 24.5,172.9 22.5,172.9 C20.5,172.9 18.5,171.9 18.5,168.9 C18.5,166.9 21,164.9 22.5,161.9 Z" fill="#d6d6d6"/>
<ellipse cx="2" cy="183" rx="4" ry="3.5" fill="#d6d6d6"/>
<path d="M17,187 L20,181 L25,178 L27,180 L24,185 Z" fill="none" stroke="#d6d6d6" stroke-width="1"/><circle cx="22.2" cy="182.5" r="0.8" fill="#d6d6d6"/>
<path d="M-1,196.8 h6 M2,196.8 v8 M1,204.8 h2" fill="none" stroke="#d6d6d6" stroke-width="1.2"/>
<path d="M19.5,195.8 L26,201.8 L23,201.8 L24.5,204.8 L23,205.3 L21.5,202.3 L19.5,204.3 Z" fill="#d6d6d6"/>
<rect x="-3" y="214.4" width="8.5" height="7" rx="1.5" fill="none" stroke="#d6d6d6" stroke-width="1.1"/>
<path d="M19,217.9 L18,216.9 C17.5,217.9 18,219.9 20,221.9 C21.5,223.4 25,223.4 26,220.9 L27,214.9 C27,213.9 26,213.9 25.5,214.9 L25.5,212.9 C25.5,211.9 24,211.9 24,212.9 L24,212.4 C24,211.4 22.5,211.4 22.5,212.4 L22.5,212.9 C22.5,211.9 21,211.9 21,212.9 Z" fill="#d6d6d6"/>
<circle cx="1" cy="233.9" r="3.3" fill="none" stroke="#d6d6d6" stroke-width="1.1"/><path d="M3.5,236.4 L6.5,239.4" stroke="#d6d6d6" stroke-width="1.4"/>
<circle cx="18.5" cy="234.4" r="1.1" fill="#d6d6d6"/>
<circle cx="22.5" cy="234.4" r="1.1" fill="#d6d6d6"/>
<circle cx="26.5" cy="234.4" r="1.1" fill="#d6d6d6"/>
<rect x="29.5" y="239.9" width="1.2" height="1.2" fill="#aaa"/>
<rect x="10.3" y="259.6" width="15.3" height="15.3" fill="#fff" stroke="#b8b8b8" stroke-width="0.8"/>
<rect x="0.4" y="249.6" width="15" height="15" fill="#000" stroke="#c8c8c8" stroke-width="0.8"/>
<path d="M21,250.5 h3 q1.5,0 1.5,1.5 v2.5" fill="none" stroke="#d6d6d6" stroke-width="0.9"/><circle cx="21.5" cy="250.5" r="0.9" fill="#d6d6d6"/><circle cx="25.5" cy="254.5" r="0.9" fill="#d6d6d6"/>
<rect x="2" y="272" width="4" height="4" fill="#fff"/><rect x="-0.5" y="269.5" width="3.5" height="3.5" fill="#000" stroke="#ccc" stroke-width="0.5"/>
<rect x="-3" y="285" width="9" height="8" fill="none" stroke="#d6d6d6" stroke-width="0.9"/><circle cx="1.5" cy="289" r="2" fill="#888"/>
<rect x="17.5" y="287" width="8" height="6" fill="none" stroke="#d6d6d6" stroke-width="0.9"/><rect x="21" y="284.5" width="8" height="5.5" fill="#535353" stroke="#d6d6d6" stroke-width="0.9"/>
<rect x="29.5" y="293.5" width="1.2" height="1.2" fill="#aaa"/><path d="M6.5,20.5 L12,25.5 L10.8,25.5 L10.8,30.7 L7.6,30.7 L7.6,27.5 L5.4,27.5 L5.4,30.7 L2.2,30.7 L2.2,25.5 L1,25.5 Z" fill="#d6d6d6"/>
<rect x="23.5" y="17" width="1" height="18" fill="#4b4b4b"/>
<rect x="54.5" y="17" width="1" height="18" fill="#4b4b4b"/>
<rect x="151.5" y="17" width="1" height="18" fill="#4b4b4b"/>
<rect x="248.5" y="17" width="1" height="18" fill="#4b4b4b"/>
<rect x="325.5" y="17" width="1" height="18" fill="#4b4b4b"/>
<rect x="404.5" y="17" width="1" height="18" fill="#4b4b4b"/>
<rect x="425.5" y="17" width="1" height="18" fill="#4b4b4b"/>
<rect x="464.5" y="17" width="1" height="18" fill="#4b4b4b"/>
<path d="M29.8,26 h8 M33.7,22 v8" stroke="#d6d6d6" stroke-width="0.7"/>
<circle cx="33.7" cy="22" r="1.25" fill="#d6d6d6"/>
<circle cx="33.7" cy="30" r="1.25" fill="#d6d6d6"/>
<circle cx="29.6" cy="26" r="1.25" fill="#d6d6d6"/>
<circle cx="37.9" cy="26" r="1.25" fill="#d6d6d6"/>
<circle cx="33.7" cy="26" r="1.5" fill="#d6d6d6"/>
<path d="M45.2,25 L47.4,27.2 L49.6,25" fill="none" stroke="#bdbdbd" stroke-width="0.9"/>
<rect x="60.5" y="22.9" width="6.4" height="6.4" rx="1" fill="#dcdcdc"/>
<path d="M61.9,26.1 L63.3,27.6 L65.6,24.3" fill="none" stroke="#333" stroke-width="1.1"/>
<rect x="155.6" y="22.9" width="6.4" height="6.4" rx="1" fill="#dcdcdc"/>
<path d="M157.0,26.1 L158.4,27.6 L160.7,24.3" fill="none" stroke="#333" stroke-width="1.1"/>
<rect x="115" y="21.2" width="33.3" height="9.5" rx="1" fill="#464646"/>
<path d="M142.4,25 L144.4,27 L146.4,25" fill="none" stroke="#bdbdbd" stroke-width="0.9"/>
<rect x="256.5" y="20.5" width="0.9" height="11" fill="#ababab"/><rect x="258" y="22.2" width="4.5" height="2.6" fill="#ababab"/><rect x="258" y="26.8" width="6.5" height="2.6" fill="#ababab"/>
<rect x="277.1" y="20.5" width="0.9" height="11" fill="#ababab"/><rect x="275.3" y="22.2" width="4.5" height="2.6" fill="#ababab"/><rect x="274.3" y="26.8" width="6.5" height="2.6" fill="#ababab"/>
<rect x="298.3" y="20.5" width="0.9" height="11" fill="#ababab"/><rect x="293.3" y="22.2" width="4.5" height="2.6" fill="#ababab"/><rect x="291.3" y="26.8" width="6.5" height="2.6" fill="#ababab"/>
<rect x="301.5" y="19" width="0.8" height="14" fill="#4a4a4a"/>
<rect x="309" y="22" width="11" height="0.8" fill="#ababab"/><rect x="310.5" y="24.2" width="8" height="2.8" fill="#ababab"/><rect x="309" y="28.5" width="11" height="0.8" fill="#ababab"/>
<rect x="332" y="21.5" width="10" height="0.8" fill="#ababab"/><rect x="333.5" y="22.5" width="2.6" height="7" fill="#ababab"/><rect x="337.5" y="22.5" width="2.6" height="4.5" fill="#ababab"/>
<rect x="350" y="25.5" width="10" height="0.8" fill="#ababab"/><rect x="351.5" y="22" width="2.6" height="7.5" fill="#ababab"/><rect x="355.5" y="23.2" width="2.6" height="5" fill="#ababab"/>
<rect x="367" y="29.5" width="10" height="0.8" fill="#ababab"/><rect x="368.5" y="21.5" width="2.6" height="7.5" fill="#ababab"/><rect x="372.5" y="24" width="2.6" height="5" fill="#ababab"/>
<rect x="385" y="19" width="0.8" height="14" fill="#4a4a4a"/>
<rect x="388" y="20.5" width="0.8" height="11" fill="#ababab"/><rect x="389.8" y="22.5" width="2.8" height="7" fill="#ababab"/><rect x="393.5" y="20.5" width="0.8" height="11" fill="#ababab"/>
<circle cx="410.5" cy="26" r="1.1" fill="#e0e0e0"/>
<circle cx="414" cy="26" r="1.1" fill="#e0e0e0"/>
<circle cx="417.6" cy="26" r="1.1" fill="#e0e0e0"/>
<path d="M470,24 a3,3 0 1,1 6,0 M469,27 a3,3 0 0,0 5,2 M477,25 a3,3 0 0,1 -1,5" fill="none" stroke="#9a9a9a" stroke-width="1"/>
<circle cx="490" cy="26" r="4.5" fill="none" stroke="#9a9a9a" stroke-width="0.9"/><circle cx="490" cy="26" r="1.8" fill="none" stroke="#9a9a9a" stroke-width="0.9"/><circle cx="487" cy="22.5" r="0.9" fill="#9a9a9a"/>
<path d="M508,21 L513,26 L508,31 L503,26 Z" fill="none" stroke="#9a9a9a" stroke-width="1.1"/><path d="M505.5,26 h5 M508,23.5 v5" stroke="#9a9a9a" stroke-width="0.8"/>
<path d="M519.5,26 h10 M524.5,21 v10" stroke="#9a9a9a" stroke-width="0.8"/><circle cx="524.5" cy="21.8" r="1.2" fill="#9a9a9a"/><circle cx="524.5" cy="30.2" r="1.2" fill="#9a9a9a"/><circle cx="520" cy="26" r="1.2" fill="#9a9a9a"/><circle cx="529" cy="26" r="1.2" fill="#9a9a9a"/>
<rect x="536" y="23.5" width="6" height="5" fill="#9a9a9a"/><path d="M542,26 L546,22.5 M542,26 L546,29.5" stroke="#9a9a9a" stroke-width="1"/>
<circle cx="1030.6" cy="25.4" r="3.6" fill="none" stroke="#d6d6d6" stroke-width="1.2"/><path d="M1033.2,28 L1035.8,30.6" stroke="#d6d6d6" stroke-width="1.4"/>
<rect x="1045.8" y="22.5" width="10" height="7.8" fill="none" stroke="#d6d6d6" stroke-width="1"/><rect x="1046" y="23" width="2.3" height="7" fill="#888"/>
<path d="M1063.5,25 L1065.2,26.7 L1067,25" fill="none" stroke="#aaa" stroke-width="0.9"/>
<path d="M1080,22.5 h-4 v8 h4" fill="none" stroke="#d6d6d6" stroke-width="1.1"/><path d="M1078,21 l2,-2" stroke="#d6d6d6" stroke-width="1"/><rect x="923" y="45" width="24" height="26.5" fill="#535353"/>
<rect x="923" y="71.5" width="24" height="1.5" fill="#464646"/>
<rect x="923" y="97.5" width="24" height="1.5" fill="#464646"/>
<rect x="949" y="90" width="77" height="2" fill="#464646"/>
<rect x="949" y="190" width="77" height="2" fill="#464646"/>
<rect x="1028" y="71.5" width="52" height="1.5" fill="#464646"/>
<rect x="1028" y="97.5" width="52" height="1.5" fill="#464646"/>
<path d="M939,39.5 v3 M941,39.5 v3" stroke="#8a8a8a" stroke-width="0.7"/>
<path d="M1019,39.5 v3 M1021,39.5 v3" stroke="#8a8a8a" stroke-width="0.7"/>
<rect x="931.2" y="55" width="3.2" height="11.5" fill="none" stroke="#d6d6d6" stroke-width="1"/><rect x="931.2" y="63.5" width="3.2" height="3" fill="#d6d6d6"/><path d="M937,56.5 q3,0 3,4 q0,3.5 -3,4.5" fill="none" stroke="#d6d6d6" stroke-width="1.1"/><path d="M936.5,55.2 l1.5,1.5 l-1.5,1" fill="#d6d6d6"/>
<text x="935.5" y="93" font-family="Liberation Serif" font-size="12" font-style="italic" font-weight="bold" fill="#d6d6d6" text-anchor="middle">A</text>
<ellipse cx="962" cy="61" rx="6" ry="3.8" fill="#d6d6d6"/><circle cx="959.5" cy="62" r="0.8" fill="#535353"/><circle cx="962" cy="62.6" r="0.8" fill="#535353"/><circle cx="964.5" cy="62" r="0.8" fill="#535353"/><circle cx="963" cy="59" r="0.9" fill="#535353"/><ellipse cx="960" cy="59.8" rx="1.6" ry="1" fill="#535353"/>
<rect x="956.8" y="74" width="10.8" height="11" fill="none" stroke="#d6d6d6" stroke-width="0.9"/><path d="M960.4,74 v11 M964,74 v11 M956.8,77.6 h10.8 M956.8,81.3 h10.8" stroke="#d6d6d6" stroke-width="0.9"/>
<path d="M962,101 L967.5,104 L962,107 L956.5,104 Z" fill="#d6d6d6"/><path d="M957,106.5 L962,109.5 L967,106.5 L967.5,107.5 L962,110.7 L956.5,107.5 Z" fill="#d6d6d6"/>
<circle cx="959.5" cy="122.5" r="2.6" fill="none" stroke="#d6d6d6" stroke-width="1"/><rect x="964.5" y="119.5" width="2" height="2" fill="#d6d6d6"/><rect x="964.5" y="123" width="2" height="2" fill="#d6d6d6"/><rect x="956.5" y="127" width="10.5" height="2" fill="#d6d6d6"/>
<circle cx="962" cy="143" r="5" fill="none" stroke="#d6d6d6" stroke-width="1"/><path d="M965.5,139.5 A5,5 0 0,1 958.5,146.5 Z" fill="#d6d6d6"/>
<circle cx="962" cy="158.7" r="3.2" fill="#9a9a9a"/><circle cx="959.8" cy="162.5" r="3.2" fill="#cfcfcf" fill-opacity="0.85"/><circle cx="964.2" cy="162.5" r="3.2" fill="#e0e0e0" fill-opacity="0.8"/>
<path d="M956.5,175.5 h11 M958,175.5 L959.5,183.5 M966,175.5 L964.5,183.5" fill="none" stroke="#d6d6d6" stroke-width="0.8"/><rect x="955.5" y="174.5" width="2" height="2" fill="#d6d6d6"/><rect x="966.5" y="174.5" width="2" height="2" fill="#d6d6d6"/><circle cx="959.5" cy="184" r="1" fill="none" stroke="#d6d6d6" stroke-width="0.7"/><circle cx="964.5" cy="184" r="1" fill="none" stroke="#d6d6d6" stroke-width="0.7"/>
<path d="M1038.5,62.5 C1036,60 1036.5,55 1041,55 C1045.5,55 1046,60 1043.5,62.5 L1043,64 L1039,64 Z" fill="none" stroke="#d6d6d6" stroke-width="0.9"/><rect x="1039.3" y="64" width="3.4" height="2.2" fill="#d6d6d6"/>
<ellipse cx="1040.5" cy="88" rx="6.3" ry="4.3" fill="#9c9c9c"/><path d="M1036,89 q2,-4 5,-2 q3,2 5,-1 M1036.5,91 q3,-3 5,-1 q2.5,2 4,-1" fill="none" stroke="#dedede" stroke-width="0.8"/></svg>
<div class="tab" style="left:42px;top:38px;color:#bdbdbd;font-size:9px;font-weight:normal">&#215;</div>
<div class="tab" style="left:53px;top:38px;color:#e2e2e2">image-from-rawpixel-id-424879-jpeg.jpg @ 33.3% (Layer 0, RGB/8*) *</div>
<div class="tab" style="left:331px;top:38px;color:#b5b5b5;font-size:9px;font-weight:normal">&#215;</div>
<div class="tab" style="left:342px;top:38px;color:#c4c4c4">image-from-rawpixel-id-424687-jpeg.jpg @ 80.9% (Quick Mask/8) *</div>
<div class="tab" style="left:612px;top:38px;color:#b5b5b5;font-size:9px;font-weight:normal">&#215;</div>
<div class="tab" style="left:624px;top:38px;color:#c4c4c4">image-from-rawpixel-id-431437-jpeg.jpg @ 27.8% (Layer 0, RGB/8*) *</div>
<div class="ot" style="left:70px;top:21.7px">Auto-Select:</div>
<div class="ot" style="left:118.5px;top:21.7px">Layer</div>
<div class="ot" style="left:165px;top:21.7px">Show Transform Controls</div>
<div class="ot" style="left:428.6px;top:21.7px;color:#727272">3D Mode:</div>
<div class="ot" style="left:44px;top:664px;font-size:7.4px">33.33%</div>
<div class="ot" style="left:102px;top:664px;font-size:7.4px">Doc: 62.6M/39.8M</div>
<div class="ot" style="left:190px;top:663px;font-size:9px">&#8250;</div>
<div class="ptxt" style="left:973px;top:56.8px">Color</div>
<div class="ptxt" style="left:973px;top:74.5px">Swatches</div>
<div class="ptxt" style="left:973px;top:101.5px">Layers</div>
<div class="ptxt" style="left:973px;top:120px">Properties</div>
<div class="ptxt" style="left:973px;top:138.5px">Adjustments</div>
<div class="ptxt" style="left:973px;top:157px">Channels</div>
<div class="ptxt" style="left:973px;top:175.5px">Paths</div>
<div class="ptxt" style="left:1052px;top:57px">Learn</div>
<div class="ptxt" style="left:1052px;top:83.5px">Libraries</div>
</body></html>
